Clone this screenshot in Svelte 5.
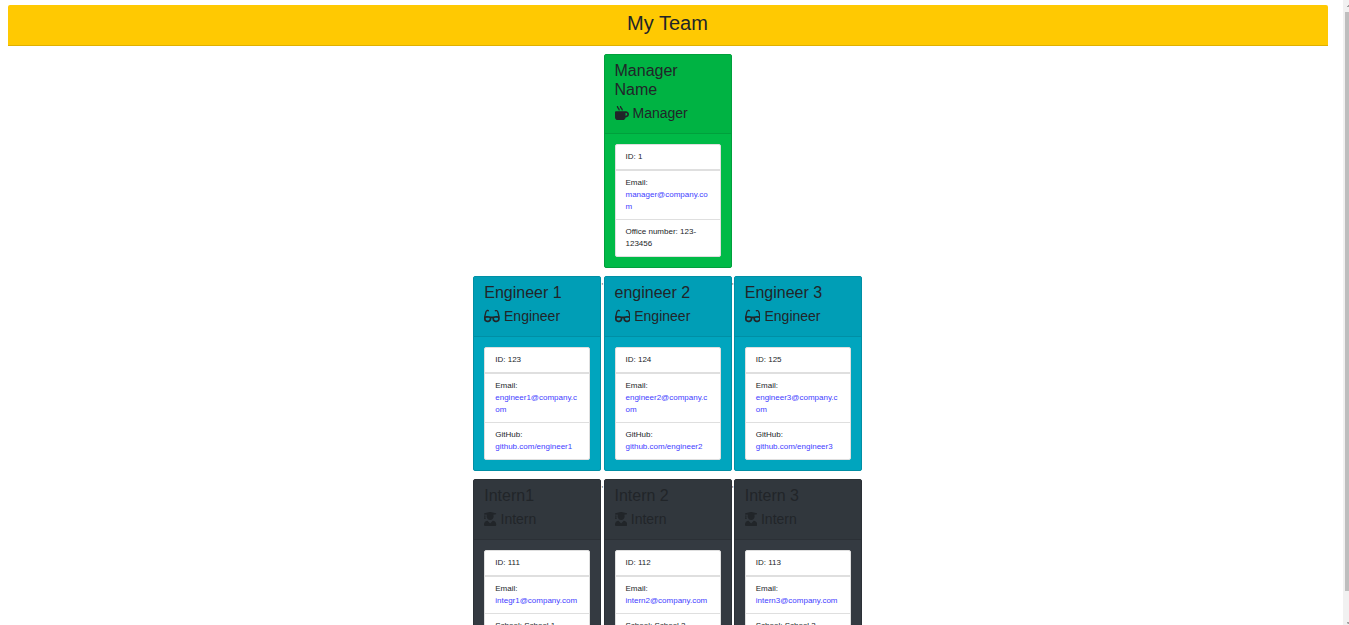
<script>
  const icons = {
    mug: {
      box: '0 0 512 512',
      d: 'M127.1 146.5c1.3 7.7 8 13.5 16 13.5h16.5c9.8 0 17.6-8.5 16.3-18-3.8-28.2-16.4-54.2-36.6-74.7-14.4-14.7-23.6-33.3-26.4-53.5C111.8 5.9 105 0 96.8 0H80.4C70.6 0 63 8.5 64.1 18c3.9 31.9 18 61.3 40.6 84.4 12 12.2 19.7 27.5 22.4 44.1zm112 0c1.3 7.7 8 13.5 16 13.5h16.5c9.8 0 17.6-8.5 16.3-18-3.8-28.2-16.4-54.2-36.6-74.7-14.4-14.7-23.6-33.3-26.4-53.5C223.8 5.9 217 0 208.8 0h-16.4c-9.8 0-17.5 8.5-16.3 18 3.9 31.9 18 61.3 40.6 84.4 12 12.2 19.7 27.5 22.4 44.1zM400 192H32c-17.7 0-32 14.3-32 32v192c0 53 43 96 96 96h192c53 0 96-43 96-96h16c61.8 0 112-50.2 112-112s-50.2-112-112-112zm0 160h-16v-96h16c26.5 0 48 21.5 48 48s-21.5 48-48 48z'
    },
    glasses: {
      box: '0 0 576 512',
      d: 'M574.1 280.37L528.75 98.66c-5.91-23.7-21.59-44.05-43-55.81-21.44-11.73-46.97-14.11-70.19-6.33l-15.25 5.08c-8.39 2.79-12.92 11.86-10.12 20.24l5.06 15.18c2.79 8.38 11.85 12.91 20.23 10.12l13.18-4.39c10.87-3.62 23-3.57 33.16 1.73 10.29 5.37 17.57 14.56 20.37 25.82l38.46 153.82c-22.19-6.81-49.79-12.46-81.2-12.46-34.77 0-73.98 7.02-114.85 26.74h-73.18c-40.87-19.74-80.08-26.75-114.86-26.75-31.42 0-59.02 5.65-81.21 12.46l38.46-153.83c2.79-11.25 10.09-20.45 20.38-25.81 10.16-5.3 22.28-5.35 33.15-1.73l13.17 4.39c8.38 2.79 17.44-1.74 20.23-10.12l5.06-15.18c2.8-8.38-1.73-17.45-10.12-20.24l-15.25-5.08c-23.22-7.78-48.75-5.41-70.19 6.33-21.41 11.77-37.09 32.11-43 55.8L1.9 280.37A64.218 64.218 0 0 0 0 295.86v70.25C0 429.01 51.58 480 115.2 480h37.12c60.28 0 110.37-45.94 114.88-105.37l2.93-38.63h35.75l2.93 38.63C313.31 434.06 363.4 480 423.68 480h37.12c63.62 0 115.2-50.99 115.2-113.88v-70.25c0-5.23-.64-10.43-1.9-15.5zm-370.72 89.42c-1.97 25.91-24.4 46.21-51.06 46.21H115.2C86.97 416 64 393.63 64 366.11v-37.54c18.12-6.49 43.42-12.92 72.58-12.92 23.86 0 47.26 4.33 69.93 12.92l-3.13 41.22zM512 366.12c0 27.51-22.97 49.88-51.2 49.88h-37.12c-26.67 0-49.1-20.3-51.06-46.21l-3.13-41.22c22.67-8.59 46.08-12.92 69.95-12.92 29.12 0 54.43 6.44 72.55 12.93v37.54z'
    },
    graduate: {
      box: '0 0 448 512',
      d: 'M319.4 320.6L224 416l-95.4-95.4C57.1 323.7 0 382.2 0 454.4v9.6c0 26.5 21.5 48 48 48h352c26.5 0 48-21.5 48-48v-9.6c0-72.2-57.1-130.7-128.6-133.8zM13.6 79.8l6.4 1.5v58.4c-7 4.2-12 11.5-12 20.3 0 8.4 4.6 15.4 11.1 19.7L3.5 242c-1.7 6.9 2.1 14 7.6 14h41.8c5.5 0 9.3-7.1 7.6-14l-15.6-62.3C51.4 175.4 56 168.4 56 160c0-8.8-5-16.1-12-20.3V87.1l66 15.9c-8.6 17.2-14 36.4-14 57 0 70.7 57.3 128 128 128s128-57.3 128-128c0-20.6-5.3-39.8-14-57l96.3-23.2c18.2-4.4 18.2-27.1 0-31.5l-190.4-46c-13-3.1-26.7-3.1-39.7 0L13.6 48.2c-18.1 4.4-18.1 27.2 0 31.6z'
    }
  };

  const rows = [
    {
      kind: 'manager', role: 'Manager', icon: 'mug',
      people: [
        { name: 'Manager Name', id: 1, email: 'manager@company.com', label: 'Office number', value: '123-123456' }
      ]
    },
    {
      kind: 'engineer', role: 'Engineer', icon: 'glasses',
      people: [
        { name: 'Engineer 1', id: 123, email: 'engineer1@company.com', label: 'GitHub', link: 'github.com/engineer1' },
        { name: 'engineer 2', id: 124, email: 'engineer2@company.com', label: 'GitHub', link: 'github.com/engineer2' },
        { name: 'Engineer 3', id: 125, email: 'engineer3@company.com', label: 'GitHub', link: 'github.com/engineer3' }
      ]
    },
    {
      kind: 'intern', role: 'Intern', icon: 'graduate',
      people: [
        { name: 'Intern1', id: 111, email: 'integr1@company.com', label: 'School', value: 'School 1' },
        { name: 'Intern 2', id: 112, email: 'intern2@company.com', label: 'School', value: 'School 2' },
        { name: 'Intern 3', id: 113, email: 'intern3@company.com', label: 'School', value: 'School 3' }
      ]
    }
  ];
</script>

<div class="window">
  <main>
    <header class="banner"><h1>My Team</h1></header>
    {#each rows as row}
      <section class="row">
        {#each row.people as person, i}
          {#if i > 0}<span class="comma">,</span>{/if}
          <article class="card {row.kind}">
            <div class="head">
              <h2>{person.name}</h2>
              <h3>
                <svg class="icon" viewBox={icons[row.icon].box} aria-hidden="true"><path d={icons[row.icon].d} /></svg>
                {row.role}
              </h3>
            </div>
            <div class="body">
              <ul>
                <li>ID: {person.id}</li>
                <li>Email: <a href="mailto:{person.email}">{person.email}</a></li>
                {#if person.link}
                  <li>{person.label}: <a href="https://{person.link}">{person.link}</a></li>
                {:else}
                  <li>{`${person.label}: ${person.value}`}</li>
                {/if}
              </ul>
            </div>
          </article>
        {/each}
      </section>
    {/each}
  </main>
  <div class="scrollbar" aria-hidden="true">
    <svg class="arrow" viewBox="0 0 4 2"><path d="M0 2V1h2V0h2v2z" /></svg>
    <div class="thumb"></div>
    <svg class="arrow" viewBox="0 0 4 2"><path d="M0 0h4v2H1V1H0z" /></svg>
  </div>
</div>

<style>
  :global(body) {
    margin: 0;
    background: #fff;
  }

  .window {
    display: flex;
    height: 100vh;
    overflow: hidden;
    font-family: "Liberation Sans", Arial, sans-serif;
    font-size: 8px;
    line-height: 12px;
    color: #212529;
  }

  main {
    flex: 1;
    min-width: 0;
    padding: 5px 15px 0 8px;
  }

  h1, h2, h3, ul {
    margin: 0;
    padding: 0;
    font-weight: 400;
  }

  .banner {
    padding: 6px 11px 10px 10px;
    background: #ffc902;
    border-bottom: 1px solid #dfb002;
    border-radius: 2px 2px 0 0;
    text-align: center;
  }

  h1 {
    font-size: 20px;
    line-height: 24px;
  }

  .row {
    display: flex;
    justify-content: center;
    margin-top: 8px;
    padding-right: 1px;
  }

  .card {
    box-sizing: border-box;
    width: 128px;
    border: 1px solid var(--line);
    border-radius: 2px;
    background: var(--body);
  }

  .manager {
    --head: #00b343;
    --body: #00ba47;
    --line: #00a03c;
  }

  .engineer {
    --head: #009eb6;
    --body: #00a5be;
    --line: #008fa5;
  }

  .intern {
    --head: #31373d;
    --body: #343a41;
    --line: #2b3036;
  }

  .head {
    padding: 6px 10px 11px;
    background: var(--head);
    border-bottom: 1px solid var(--line);
  }

  h2 {
    margin-bottom: 6px;
    font-size: 16px;
    line-height: 19px;
  }

  h3 {
    display: flex;
    align-items: flex-start;
    gap: 4px;
    font-size: 14px;
    line-height: 17px;
  }

  .icon {
    height: 14px;
    margin-top: 1px;
    fill: currentColor;
  }

  .body {
    padding: 10px;
  }

  ul {
    list-style: none;
    background: #fff;
    border: 1px solid #dfdfdf;
    border-radius: 2px;
  }

  li {
    padding: 6px 10px;
    border-bottom: 1px solid #dfdfdf;
    overflow-wrap: break-word;
  }

  li:first-child {
    border-bottom-width: 2px;
  }

  li:last-child {
    border-bottom: 0;
  }

  a {
    color: #4340ff;
    text-decoration: none;
  }

  .scrollbar {
    display: flex;
    flex-direction: column;
    align-items: flex-end;
    gap: 5px;
    width: 6px;
    box-sizing: border-box;
    padding: 5px 0 1px;
    background: #f1f1f1;
  }

  .arrow {
    width: 2px;
    height: 2px;
    fill: #505050;
  }

  .thumb {
    width: 4px;
    flex: 1;
    margin-bottom: 26px;
    background: #bebebe;
  }
</style>
